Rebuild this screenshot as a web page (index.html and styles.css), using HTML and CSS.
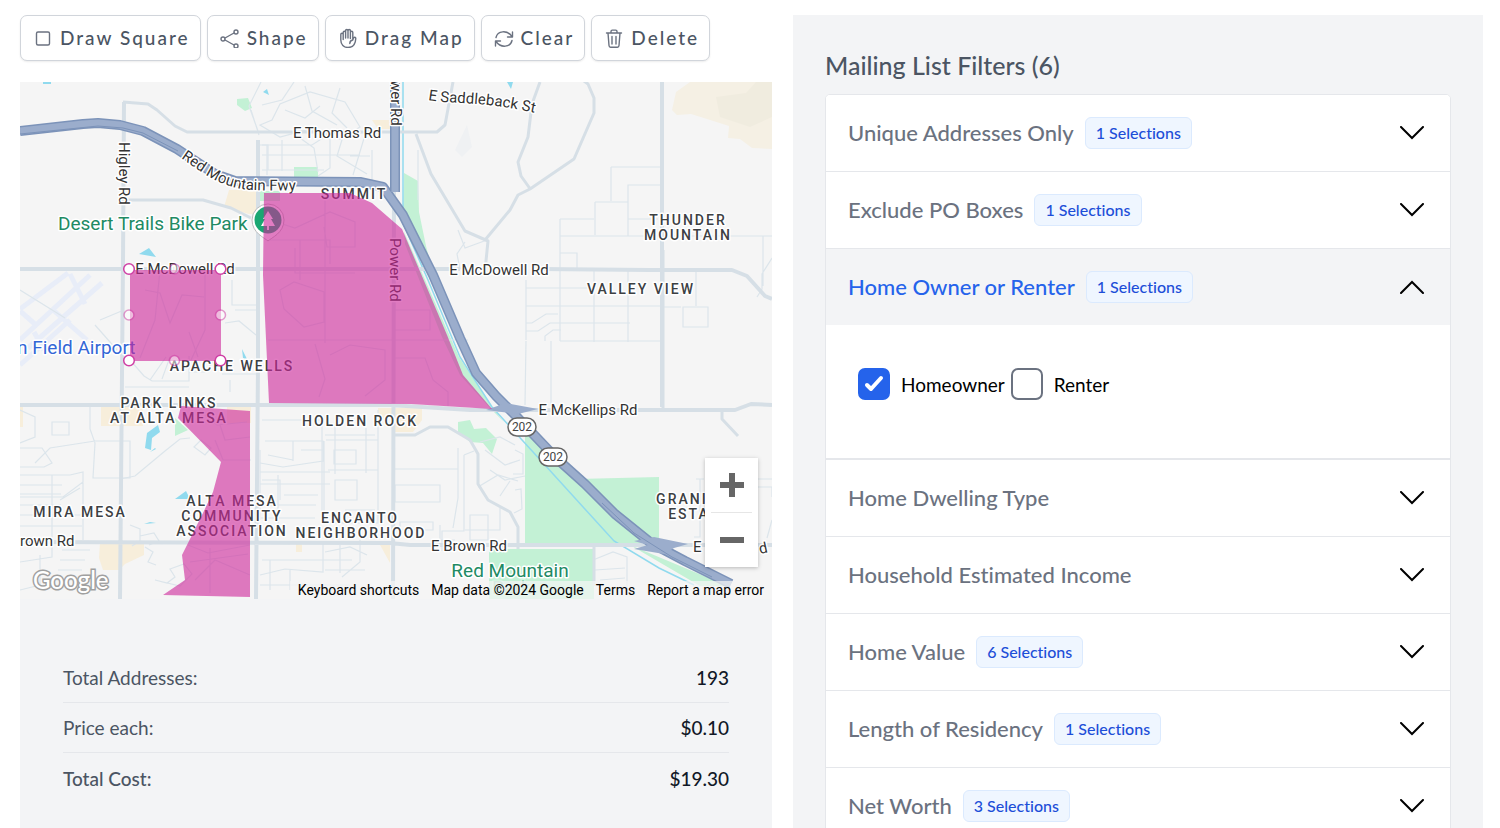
FILE: index.html
```html
<!DOCTYPE html>
<html lang="en">
<head>
<meta charset="utf-8">
<meta name="viewport" content="width=device-width, initial-scale=1">
<title>Mailing List</title>
<link rel="stylesheet" href="styles.css">
</head>
<body>
<main class="page">
  <section class="map-column">
    <div class="toolbar">
      <button class="tool" type="button"><svg class="tool-icon" viewBox="0 0 20 20"><rect x="3.5" y="4" width="13" height="13" rx="1.5"/></svg>Draw Square</button>
      <button class="tool" type="button"><svg class="tool-icon" viewBox="0 0 20 20"><circle cx="3" cy="11" r="2"/><circle cx="16" cy="4" r="2"/><circle cx="16" cy="18" r="2"/><path d="M5 10l9-5M5 12l9 5"/></svg>Shape</button>
      <button class="tool" type="button"><svg class="tool-icon" viewBox="0 0 20 20"><path d="M5.200 11.500V4.500a1.200 1.200 0 0 1 2.400 0V10M7.600 10V2.700a1.200 1.200 0 0 1 2.400 0V10M10 10V2.700a1.200 1.200 0 0 1 2.400 0V10.500M12.400 10.500V4.500a1.200 1.200 0 0 1 2.400 0V12c-2 .3-3 1.500-3 3.500M5.200 6.500a1.200 1.200 0 0 0-2.400 0V12c0 4.500 3 7.500 7.200 7.500s7.500-3 7.800-9c0-1.500-2-1.600-2.400-.2L14.800 12"/></svg>Drag Map</button>
      <button class="tool" type="button"><svg class="tool-icon" viewBox="0 0 20 20"><path d="M18.500 4v5h-5M1.500 18v-5h5M2 9.500C3.500 2.800 13 1.500 18 8.500M18 12.500C16.500 19.200 7 20.500 2 13.500"/></svg>Clear</button>
      <button class="tool" type="button"><svg class="tool-icon" viewBox="0 0 20 20"><path d="M2.500 5h15M4 5l1 12.500c.1 1.200.6 1.700 1.500 1.700h7c.9 0 1.400-.5 1.500-1.700L16 5M7 5V3.500c0-1 .4-1.400 1.300-1.400h3.400c.9 0 1.300.4 1.300 1.400V5M8 8.500v7.500M12 8.500v7.500"/></svg>Delete</button>
    </div>

    <div class="map">
      <svg class="map-canvas" viewBox="20 82 752 517" role="img" aria-label="Map of north-east Mesa with three selected areas">
        <defs>
          <path id="fwy-label" d="M181 158C200 171 220 188 251 190Q275 191 310 190"/>
          <path id="saddle-label" d="M428 100C455 105 480 100 540 114"/>
        </defs>
        <rect class="land" x="20" y="82" width="752" height="517"/>
        <g class="hill">
          <path d="M672 110l4-18 14-10h82v67l-20-1-12-9-12-1 1-12-22-7-16-5-14 1z"/>
          <path class="hill-shade" d="M716 97l30-4 10-11h16v35l-22 10-30-10z"/>
        </g>
        <g class="park">
          <path d="M237 99l11-1 4 10-7 3-8-6zM294 167h24v17h-24zM260 191h20v10h-20z"/>
          <path d="M404 173l14 8 1 31 7 34 8 30-31-62z"/>
          <path d="M404 232l55 125 35 53 10 12-14-14-30-33-18-38-37-93z"/>
          <path d="M458 422l12-2 4 9 12-1 11 11-5 15-9-11-13-1-12-10z"/>
          <path d="M525 432l52 47 82-2v66H525z"/>
          <path d="M489 549h105v50H489zM175 418l13 12-13 6zM630 545l98 41h-28z"/>
        </g>
        <g class="sand">
          <path d="M229 190h30v24h-10l-25-7zM101 406h42v20h-42zM227 407h24v16h-24zM378 408h44v12l-9 12h-18l-3-14h-14zM372 120h24v9h-18zM100 543h44v12l-19 9-5 5v1h-17l-4-12zM20 407h3v20h-3zM296 542h6v10h-6zM379 543h11v20z"/>
        </g>
        <g class="water">
          <path d="M139 254l10-6 7 9zM158 425l-11 8-2 15 6 2 1-12 8-6zM155 448l-5 4 6-3zM175 499l11-8 4 8zM144 524l6-2 6 1zM242 349l5 10-4-1zM263 92l4-3 2 6zM507 82h6l-2 7zM43 82h8v2h-8z"/>
          <path class="canal" d="M403 82v141l25 57 32 77 32 50 52 57 70 77 45 27 35 17"/>
        </g>
        <path class="knoll" d="M455 150l12-25 5 22-10 10z"/>
        <g class="runway">
          <path d="M20 340l70-65M28 348l74-65M20 309l48-36M36 325l-16-14M52 309l35 31M70 274l15 30M20 365l50-45M44 350l-10-18"/>
        </g>
        <g class="street">
          <path d="M260 125l12-5 8-16 30-12 35 10 15 25-20 12-30-10-30 8zM262 105l20-5 12-18M285 110l20 8 15-12M305 86l7 25 25 14M340 88l-8 25 15 15M262 145h50l25-16M262 155h98M267 145v30M282 140v31M300 138l14 10 4 24M262 170h62M330 130v38l-12 8M365 135l-12 40M345 130l-8 26 30 18M350 156h20M262 180h110v-30"/>
          <path d="M251 110l8 25M261 82l-12 24 9 25M260 145h8v25"/>
          <path d="M418 150v50M458 230l7 18 22-8M465 242l-8 12 3 15"/>
          <path d="M20 410l15 7v20l-15 6M20 448h22l10 15-8 4H20M52 422h17v13H52zM90 407v22l5 14-2 35h37v-37H95l-45 7-15 15"/>
          <path d="M20 475h50l13-3v10l-20 15H20M20 485h42M20 494h41M20 505h41M20 515h62M20 526h62M52 475v82l-32 5M83 480v60M60 500l20-12M40 555v30l-20 5M62 550h28M60 560h25M58 570h24M55 580h20"/>
          <path d="M120 479l15-3 30-25 15-12 10-1M130 525l10 4v12l-8 5M140 536l14-3 5 8-10 4M155 580l12 3 8-6-5-8 14-5 8 10-12 12zM145 547l8 5-5 10 8 3M194 447l7-7 10 8-6 7z"/>
          <path d="M130 360l14 16 8 5h37v-25M150 380l16-23M170 357l-8 22M125 387h64M189 372h16l10-13M222 374h34M230 380v12M189 332l9 25M232 280v25h25M235 310h22v14M225 323l14-2 17 14"/>
          <path d="M265 441h58v20l-40 6-23-4M268 455l25 5M260 472h70M293 441v20M301 450h23M324 441v82h54v-83h-52M334 450h22v14h-22zM335 480h22v20h-22zM366 428v45M378 410v60h-50M278 475v52M260 484h70M284 495h34M268 505h48M260 518h55M335 474v-50M325 435h50M345 510h30"/>
          <path d="M262 420h60v100M262 560h90M260 575l25-6 38 3v-30M260 585h90M270 560v30M325 552l25-5 17 8M325 570h40M340 545v28M290 590v-20M360 540v22l-18 15"/>
          <path d="M395 469h63M395 485h45v17h-45zM400 530h33v-8h-33zM458 448v50l-5 30M464 455v76h-22v20M464 455l10-4M480 442l20-5 15 8M485 450l20 15 15-5M490 470l15 10 20-4M478 487l20-12 20 6M500 496l10-15M470 515h18v25h-18zM465 530h35v-22M440 525v15h15"/>
          <path d="M611 167h51M611 167v34M595 202h33v-17h34M595 202v33M560 219h34M560 219v122M560 236h203v50M628 202v34M560 253h17v17M628 219h30M560 341h101M526 280v60M526 288h69M526 306h137M594 271v71M628 271v71M696 272v34M683 307h25v20h-25zM663 307h18M526 323h6l14-9h12M526 331h12l12-8h80M545 341v-5l8-6h8M551 341v65M526 341l-1 64M732 236h40M772 258l-10 16v15l-5 8M696 479h8M700 479v58h-6M758 479h14M758 487h14v10M772 520l-5 18"/>
          <path d="M515 450l8 4v20h-10M515 490l6-1 1 20-8 4M593 560l20-8 14 5v38M595 570l30-2M600 580l25-2M600 590l25-2M745 555l-18 10-10-5"/>
          <path d="M270 220l25 8 35-16 25 10v25h-28l-3-20M270 240h60v24M295 248v25h60M325 193v150M300 240v40M280 290l14-8 30 10v30l-20 5-20-18zM395 310h35v20h-35M268 340h200M315 344l10 35-6 18M330 355l20-10 35 5v30l-20 16M395 358h30l8 22 15 12v14"/>
          <path d="M205 270v60l-14 30M160 270l-5 50-15 38M145 290l15 3 10 30 12-28 22 2M205 415l12 10 30-3M220 425l5 15 25-3M215 440l8 20h28M188 545l20 8 42-8M190 562l58-8M195 580l20-20 35 15M210 548v45M20 290l45 28M100 320l24-10M95 325l22 25"/>
          <path d="M260 450v70M280 500v-20h-18"/>
        </g>
        <g class="road">
          <path d="M124 102l-1 160-3 337M258 140v225l-2 234M394 190l-1 409M20 269h440M540 269l110 1h82l15 6 18 20 7 3M20 405h370l80 5h265l16-6 21 1M20 542l370 1 20 2h248M658 545h114M662 82v71M662 150v257"/>
        </g>
        <g class="road mid">
          <path d="M123 102l25 2 9 6 18 16 12 6h250l8-7 8-43M125 200h78l28 8 20 10M416 134l15 40 34 57 23 10-3 30M485 240l25-30 8-15 12-6 44-30 20-46v-15l-6-14-12-9M531 190l-10-14-3-14 10-25 4-33 8-22M395 435h20l15-8h18l22 13 8 14v30l10 16 22 12 8 15v22M594 546v40M663 250v158M722 412v7l16 17"/>
        </g>
        <g class="freeway-edge"><path d="M395 82v110M20 131l63-7 15-1 22 2 23 6 34 18 38 25 20 7 125 1 23 5 20 28 30 60 27 63 16 35 20 23 20 20 40 42 29 26 30 30 36 29 34 18 46 23"/></g>
        <g class="freeway"><path d="M395 82v110M20 131l63-7 15-1 22 2 23 6 34 18 38 25 20 7 125 1 23 5 20 28 30 60 27 63 16 35 20 23 20 20 40 42 29 26 30 30 36 29 34 18 46 23"/></g>
        <path class="ramp" d="M486 410l20-7 32 6-20 5zM634 541l20-4 34 7-14 4-10 6-30-5 14-4z"/>
        <path class="freeway-core" d="M20 134l78-8 25 2 20 5 35 18M602 503l32 30 38 24 40 20"/>

        <g class="label">
          <text x="337" y="138" text-anchor="middle">E Thomas Rd</text>
          <text x="499" y="275" text-anchor="middle">E McDowell Rd</text>
          <text x="185" y="274" text-anchor="middle">E McDowell Rd</text>
          <text x="588" y="415" text-anchor="middle">E McKellips Rd</text>
          <text x="469" y="551" text-anchor="middle">E Brown Rd</text>
          <text x="20" y="546">rown Rd</text>
          <text x="693" y="552">E</text>
          <text x="760" y="554" transform="rotate(-12 760 554)">d</text>
          <text transform="translate(119 142) rotate(90)">Higley Rd</text>
          <text transform="translate(390 238) rotate(90)">Power Rd</text>
          <text transform="translate(391 80) rotate(90)">wer Rd</text>
          <text><textPath href="#fwy-label">Red Mountain Fwy</textPath></text>
          <text><textPath href="#saddle-label">E Saddleback St</textPath></text>
        </g>
        <g class="area">
          <text x="354" y="199">SUMMIT</text>
          <text x="688" y="225">THUNDER</text><text x="688" y="240">MOUNTAIN</text>
          <text x="641" y="294">VALLEY VIEW</text>
          <text x="232" y="371">APACHE WELLS</text>
          <text x="169" y="408">PARK LINKS</text><text x="169" y="423">AT ALTA MESA</text>
          <text x="360" y="426">HOLDEN ROCK</text>
          <text x="80" y="517">MIRA MESA</text>
          <text x="232" y="506">ALTA MESA</text><text x="232" y="521">COMMUNITY</text><text x="232" y="536">ASSOCIATION</text>
          <text x="360" y="523">ENCANTO</text><text x="361" y="538">NEIGHBORHOOD</text>
          <text x="692" y="504">GRANITE</text><text x="704" y="519">ESTATES</text>
        </g>
        <g class="place">
          <text x="58" y="230">Desert Trails Bike Park</text>
          <text x="510" y="577" text-anchor="middle">Red Mountain</text>
          <text class="faded" x="492" y="594">Park</text>
          <text class="airport" x="17" y="354">n Field Airport</text>
        </g>
        <g class="shield">
          <rect x="508" y="418" width="28" height="18" rx="9"/><text x="522" y="431">202</text>
          <rect x="539" y="448" width="28" height="18" rx="9"/><text x="553" y="461">202</text>
        </g>
        <g class="pin">
          <path class="pin-rim" d="M268 241c-3-3-16-8-16-21a16 16 0 0 1 32 0c0 13-13 18-16 21z"/>
          <circle class="pin-face" cx="268" cy="220" r="13.500"/>
          <path class="pin-tree" d="M268 211l5 8h-2l4 7h-6v4h-2v-4h-6l4-7h-2z"/>
        </g>

        <g class="zone">
          <path d="M264 193h86l22 10 30 26 45 106 16 40 29 34-81-5-142-1-6-128z"/>
          <path d="M130 270h91v91h-91z"/>
          <path d="M181 406l69 5v186l-87-2 22-15-3-25 20-40 11-23 8-30-43-44z"/>
        </g>
        <g class="handle">
          <circle cx="129" cy="269" r="5.300"/><circle cx="220.500" cy="269" r="5.300"/><circle cx="129" cy="360.500" r="5.300"/><circle cx="220.500" cy="360.500" r="5.300"/>
          <g class="midpoint"><circle cx="174.500" cy="269" r="5"/><circle cx="129" cy="315" r="5"/><circle cx="220.500" cy="315" r="5"/><circle cx="174.500" cy="360.500" r="5"/></g>
        </g>
        <text class="brand" x="33" y="589">Google</text>
      </svg>
      <div class="zoom">
        <button class="zoom-button" type="button" aria-label="Zoom in"><svg viewBox="0 0 26 26"><path d="M1 13h24M13 1v24"/></svg></button>
        <button class="zoom-button" type="button" aria-label="Zoom out"><svg viewBox="0 0 26 26"><path d="M1 13h24"/></svg></button>
      </div>
      <div class="credits">
        <button class="credit" type="button">Keyboard shortcuts</button>
        <span class="credit">Map data ©2024 Google</span>
        <a class="credit" href="#terms">Terms</a>
        <a class="credit" href="#report">Report a map error</a>
      </div>
    </div>

    <dl class="totals">
      <div class="total"><dt>Total Addresses:</dt><dd>193</dd></div>
      <div class="total"><dt>Price each:</dt><dd>$0.10</dd></div>
      <div class="total grand"><dt>Total Cost:</dt><dd>$19.30</dd></div>
    </dl>
  </section>

  <section class="filters">
    <h2 class="filters-title">Mailing List Filters (6)</h2>
    <div class="accordion">
      <button class="filter" type="button" aria-expanded="false"><span class="filter-name">Unique Addresses Only</span><span class="badge">1 Selections</span><svg class="chevron" viewBox="0 0 24 14"><path d="M1 1l11 11L23 1"/></svg></button>
      <button class="filter" type="button" aria-expanded="false"><span class="filter-name">Exclude PO Boxes</span><span class="badge">1 Selections</span><svg class="chevron" viewBox="0 0 24 14"><path d="M1 1l11 11L23 1"/></svg></button>
      <button class="filter open" type="button" aria-expanded="true"><span class="filter-name">Home Owner or Renter</span><span class="badge">1 Selections</span><svg class="chevron" viewBox="0 0 24 14"><path d="M1 13L12 2l11 11"/></svg></button>
      <div class="choices">
        <label class="choice"><input class="tick" type="checkbox" checked>Homeowner</label>
        <label class="choice"><input class="tick" type="checkbox">Renter</label>
      </div>
      <button class="filter" type="button" aria-expanded="false"><span class="filter-name">Home Dwelling Type</span><svg class="chevron" viewBox="0 0 24 14"><path d="M1 1l11 11L23 1"/></svg></button>
      <button class="filter" type="button" aria-expanded="false"><span class="filter-name">Household Estimated Income</span><svg class="chevron" viewBox="0 0 24 14"><path d="M1 1l11 11L23 1"/></svg></button>
      <button class="filter" type="button" aria-expanded="false"><span class="filter-name">Home Value</span><span class="badge">6 Selections</span><svg class="chevron" viewBox="0 0 24 14"><path d="M1 1l11 11L23 1"/></svg></button>
      <button class="filter" type="button" aria-expanded="false"><span class="filter-name">Length of Residency</span><span class="badge">1 Selections</span><svg class="chevron" viewBox="0 0 24 14"><path d="M1 1l11 11L23 1"/></svg></button>
      <button class="filter" type="button" aria-expanded="false"><span class="filter-name">Net Worth</span><span class="badge">3 Selections</span><svg class="chevron" viewBox="0 0 24 14"><path d="M1 1l11 11L23 1"/></svg></button>
    </div>
  </section>
</main>
</body>
</html>
```
FILE: styles.css
```css
* { box-sizing: border-box; }
body {
  margin: 0;
  background: #fff;
  color: #111827;
  font-family: Lato, Inter, sans-serif;
  font-variant-ligatures: none;
}
button { font: inherit; color: inherit; cursor: pointer; }

.page {
  display: grid;
  grid-template-columns: 752fr 690fr;
  grid-template-rows: minmax(0, 1fr);
  gap: 21px;
  height: 100vh;
  padding: 15px 17px 0 20px;
}
.map-column { display: flex; flex-direction: column; min-width: 0; }

.toolbar { display: flex; flex-wrap: wrap; gap: 6px; margin-bottom: 21px; }
.tool {
  display: flex;
  align-items: center;
  gap: 7px;
  height: 46px;
  padding: 0 10px 2px 12px;
  border: 1px solid #d1d5db;
  border-radius: 7px;
  background: #fff;
  box-shadow: 0 1px 2px rgba(0, 0, 0, .08);
  color: #4b5563;
  font-size: 19px;
  font-weight: 500;
  font-variant-ligatures: none;
  letter-spacing: 2px;
  white-space: nowrap;
}
.tool-icon {
  width: 20px;
  height: 20px;
  margin-top: 2px;
  fill: none;
  stroke: #6b7280;
  stroke-width: 1.4;
  stroke-linecap: round;
  stroke-linejoin: round;
}

.map { position: relative; overflow: hidden; font-family: Roboto, sans-serif; }
.map-canvas { display: block; width: 100%; height: auto; }
.land { fill: #f5f5f5; }
.hill { fill: #f5f0e4; }
.hill-shade { fill: #f0ecdf; }
.park { fill: #c3f1d5; }
.sand { fill: #f7eedb; }
.water { fill: #90daee; }
.canal { fill: none; stroke: #90daee; stroke-width: 1.5; }
.knoll { fill: #eff1f3; }
.runway { fill: none; stroke: #e8edf8; stroke-width: 5; }
.street { fill: none; stroke: #dce5eb; stroke-width: 1.2; }
.road { fill: none; stroke: #d6dfe6; stroke-width: 4; stroke-linejoin: round; }
.road.mid { stroke-width: 3; }
.freeway-edge, .freeway, .freeway-core { fill: none; stroke-linejoin: round; }
.freeway-edge { stroke: #7c93b9; stroke-width: 10; }
.freeway { stroke: #9badcc; stroke-width: 7; }
.freeway-core { stroke: #7c93b9; stroke-width: 1; }
.ramp { fill: #9badcc; }
.label text, .area text, .place text {
  paint-order: stroke;
  stroke: #fff;
  stroke-width: 3px;
  stroke-linejoin: round;
}
.label { fill: #333; font-size: 15px; }
.area { fill: #3c4043; font-size: 14px; font-weight: 500; letter-spacing: 2px; text-anchor: middle; }
.place { fill: #218a63; font-size: 19px; }
.place .airport { fill: #3367d6; }
.faded { opacity: .3; }
.shield rect { fill: #fff; stroke: #666; stroke-width: 1.5; }
.shield text { fill: #444; font-size: 12px; text-anchor: middle; }
.pin-rim { fill: #fff; stroke: #bbb; }
.pin-face { fill: #1aa772; }
.pin-tree { fill: #fff; }
.zone { fill: #cd2599; fill-opacity: .6; }
.handle { fill: #fff; stroke: #cf40a5; stroke-width: 1.5; }
.midpoint { opacity: .5; }
.brand {
  font: 500 24px Lato, sans-serif;
  fill: #fff;
  stroke: #a0a0a0;
  stroke-width: 3px;
  paint-order: stroke;
}

.zoom {
  position: absolute;
  right: 14px;
  bottom: 32px;
  display: flex;
  flex-direction: column;
  width: 53px;
  padding: 0 6px;
  background: #fff;
  box-shadow: 0 1px 4px rgba(0, 0, 0, .25);
}
.zoom-button {
  display: grid;
  place-items: center;
  height: 54px;
  padding: 0;
  border: 0;
  background: none;
}
.zoom-button + .zoom-button { height: 55px; border-top: 1px solid #e6e6e6; }
.zoom-button svg { width: 26px; height: 26px; stroke: #666; stroke-width: 6; }
.credits {
  position: absolute;
  right: 0;
  bottom: 0;
  display: flex;
  gap: 12px;
  padding: 0 8px;
  background: rgba(245, 245, 245, .7);
  color: #000;
  font-size: 14px;
  line-height: 18px;
}
.credit { padding: 0; border: 0; background: none; color: inherit; text-decoration: none; white-space: nowrap; }

.totals { flex: 1; margin: 0; padding: 54px 43px 0; background: #f3f4f6; }
.total {
  display: flex;
  align-items: center;
  justify-content: space-between;
  height: 50px;
  border-bottom: 1px solid #e5e7eb;
  font-size: 19px;
}
.total.grand { border-bottom: 0; }
.total dt { color: #4b5563; }
.total dd { margin: 0; font-weight: 500; }
.grand dt { font-weight: 500; }

.filters {
  min-width: 0;
  padding: 34px 32px 32px;
  background: #f3f4f6;
  overflow-y: auto;
  scrollbar-width: none;
}
.filters-title {
  margin: 0 0 13px;
  color: #4b5563;
  font-size: 25px;
  font-weight: 500;
  line-height: 32px;
}
.accordion { border: 1px solid #e5e7eb; border-radius: 5px; background: #fff; overflow: hidden; }
.filter {
  display: flex;
  align-items: center;
  gap: 11px;
  width: 100%;
  height: 77px;
  padding: 0 26px 0 22px;
  border: 0;
  border-bottom: 1px solid #e5e7eb;
  background: #fff;
  color: #6b7280;
  font-size: 22px;
  font-weight: 500;
  font-variant-ligatures: none;
  text-align: left;
}
.filter.open { height: 76px; border-bottom: 0; background: #f3f4f6; color: #2563eb; }
.filter-name { padding-bottom: 2px; }
.badge {
  padding: 0 10px;
  border: 1px solid #dbeafe;
  border-radius: 6px;
  background: #eff6ff;
  color: #1d4ed8;
  font-size: 16px;
  line-height: 30px;
}
.chevron {
  width: 24px;
  height: 14px;
  margin-left: auto;
  fill: none;
  stroke: #000;
  stroke-width: 2;
  stroke-linecap: round;
}
.choices {
  display: flex;
  align-items: flex-start;
  gap: 6px;
  height: 135px;
  padding: 43px 32px;
  border-bottom: 2px solid #e5e7eb;
}
.choice { display: flex; align-items: center; gap: 11px; color: #000; font-size: 19px; }
.tick {
  appearance: none;
  width: 32px;
  height: 32px;
  margin: 0;
  border: 2px solid #6b7280;
  border-radius: 7px;
  background: #fff;
}
.tick:checked {
  border-color: #2563eb;
  background: #2563eb url("data:image/svg+xml,%3Csvg xmlns='http://www.w3.org/2000/svg' viewBox='0 0 28 28'%3E%3Cpath d='M7 15l4 4 10-11' fill='none' stroke='white' stroke-width='4' stroke-linecap='round' stroke-linejoin='round'/%3E%3C/svg%3E") center / 28px no-repeat;
}
```
